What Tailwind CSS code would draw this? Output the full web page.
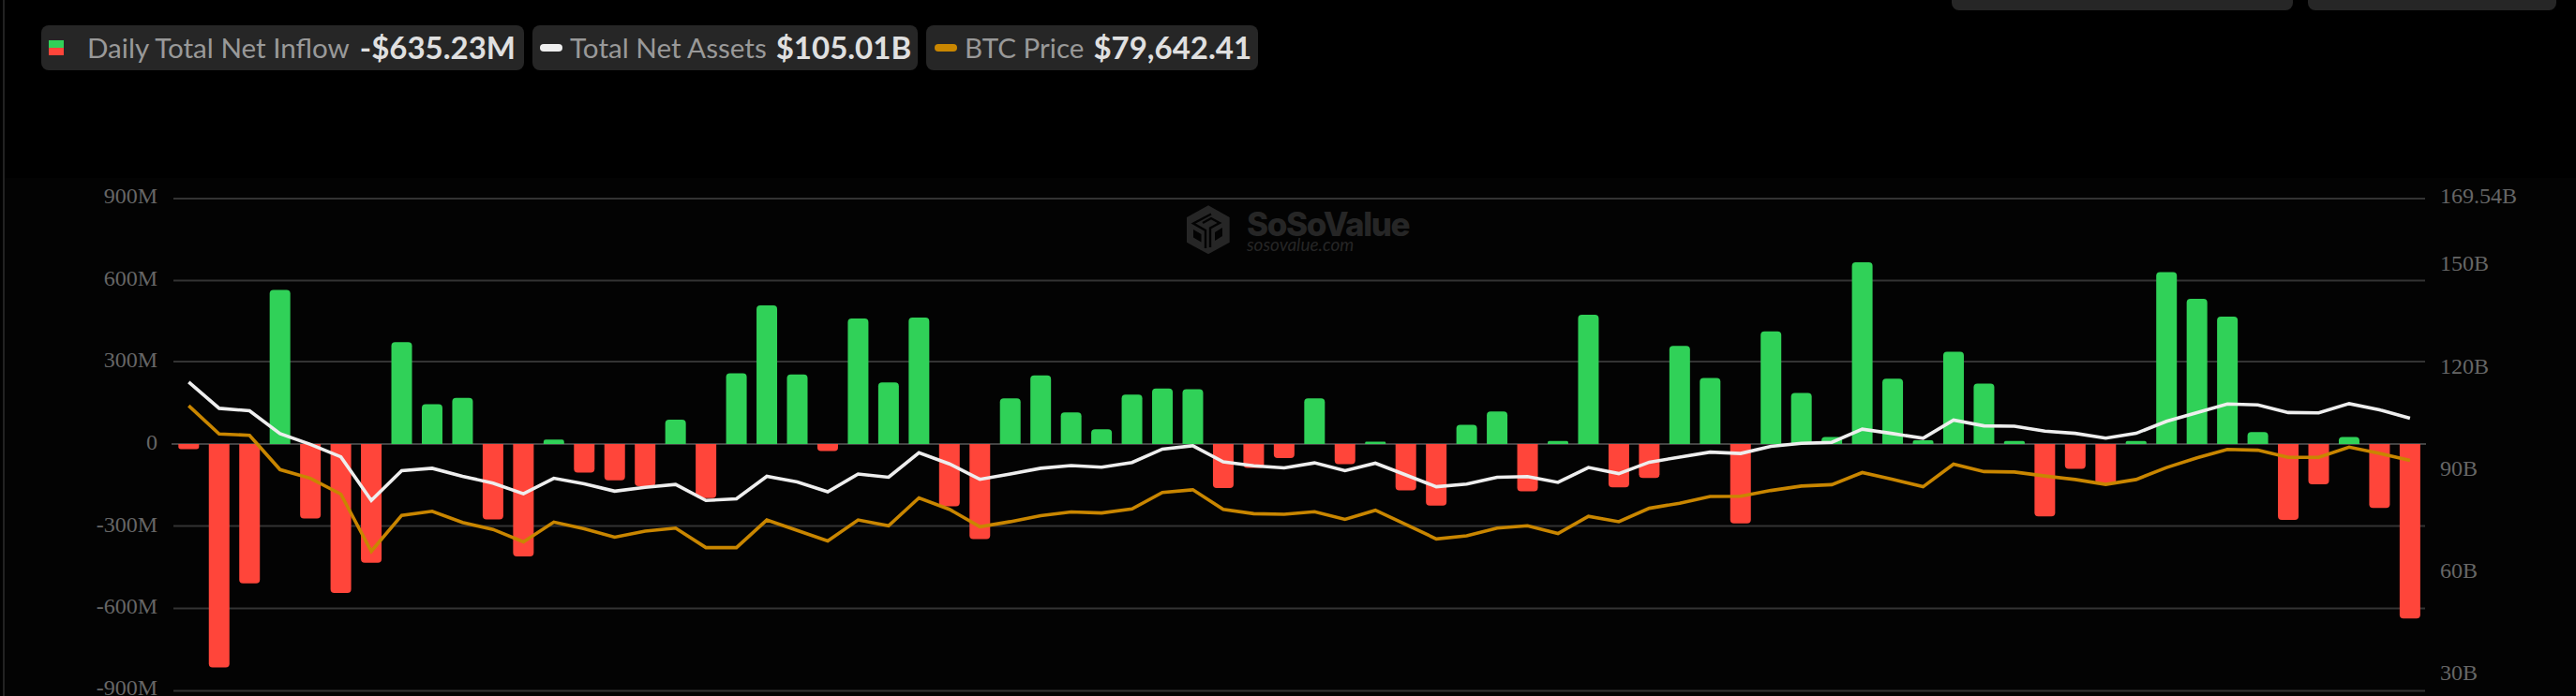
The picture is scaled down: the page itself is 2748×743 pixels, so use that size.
<!DOCTYPE html>
<html lang="en">
<head>
  <meta charset="UTF-8">
  <title>Daily Total Net Inflow</title>
  <script src="https://cdn.jsdelivr.net/npm/@tailwindcss/browser@4"></script>
</head>
<body class="bg-black overflow-hidden">
  <div class="w-[2748px] h-[743px] overflow-hidden bg-black">
    <div class="ml-[3px] h-full border-l-2 border-[#222] bg-[#030303]">
      <!-- top right buttons, cut off by the screenshot -->
      <div class="h-[11px] flex justify-end gap-[16px] pr-[21px] bg-black">
        <div class="w-[364px] h-[48px] -mt-[37px] rounded-lg bg-[#262626]"></div>
        <div class="w-[265px] h-[48px] -mt-[37px] rounded-lg bg-[#262626]"></div>
      </div>

      <!-- legend -->
      <div class="flex gap-[9px] pt-[16px] pb-[115px] pl-[39px] bg-black font-['Lato',sans-serif]">
        <div class="flex items-center h-[48px] w-[515px] pl-[8px] rounded-lg bg-[#262626]">
          <div class="w-[16px] h-[16px] flex flex-col">
            <div class="h-[8px] bg-[#30d158]"></div>
            <div class="h-[8px] bg-[#ff453a]"></div>
          </div>
          <span class="ml-[25px] text-[29.6px] text-[#999]">Daily Total Net Inflow</span>
          <span class="ml-[11px] text-[33px] font-bold text-[#e0e0e0]">-$635.23M</span>
        </div>
        <div class="flex items-center h-[48px] w-[411px] pl-[8px] rounded-lg bg-[#262626]">
          <div class="w-[24px] h-[8px] rounded-full bg-[#eee]"></div>
          <span class="ml-[8px] text-[29.6px] text-[#999]">Total Net Assets</span>
          <span class="ml-[10px] text-[33px] font-bold text-[#e0e0e0]">$105.01B</span>
        </div>
        <div class="flex items-center h-[48px] w-[354px] pl-[9px] rounded-lg bg-[#262626]">
          <div class="w-[24px] h-[8px] rounded-full bg-[#c98600]"></div>
          <span class="ml-[8px] text-[29.6px] text-[#999]">BTC Price</span>
          <span class="ml-[10px] text-[33px] font-bold text-[#e0e0e0]">$79,642.41</span>
        </div>
      </div>

      <!-- chart -->
      <svg id="chart" class="block w-[2743px] h-[553px]" viewBox="5 190 2743 553">
        <g stroke="#333" stroke-width="2">
          <line x1="185" x2="2587" y1="212" y2="212"/>
          <line x1="185" x2="2587" y1="299.5" y2="299.5"/>
          <line x1="185" x2="2587" y1="386" y2="386"/>
          <line x1="183" x2="2588" y1="474" y2="474" stroke="#444"/>
          <line x1="185" x2="2587" y1="561.5" y2="561.5"/>
          <line x1="185" x2="2587" y1="649.5" y2="649.5"/>
          <line x1="185" x2="2587" y1="737.5" y2="737.5"/>
        </g>

        <g fill="#666" font-size="24" font-family="'Liberation Serif', serif" text-anchor="end">
          <text x="168" y="217">900M</text>
          <text x="168" y="305">600M</text>
          <text x="168" y="392">300M</text>
          <text x="168" y="480">0</text>
          <text x="168" y="568">-300M</text>
          <text x="168" y="655">-600M</text>
          <text x="168" y="742">-900M</text>
        </g>
        <g fill="#666" font-size="24" font-family="'Liberation Serif', serif">
          <text x="2603" y="217">169.54B</text>
          <text x="2603" y="289">150B</text>
          <text x="2603" y="399">120B</text>
          <text x="2603" y="508">90B</text>
          <text x="2603" y="617">60B</text>
          <text x="2603" y="726">30B</text>
        </g>

        <!-- watermark: solid hexagon with the cube's S cut out -->
        <path fill="#262626" d="M1289 219.3 L1311.7 232 L1311.7 258.7 L1289 271.3 L1266 258.7 L1266 232 Z"/>
        <g fill="#030303">
          <path d="M1273 245 L1281.5 250 L1281.5 258.5 L1273 253.5 Z"/>
          <path d="M1296 248 L1304 243 L1304 252 L1296 257 Z"/>
        </g>
        <path fill="none" stroke="#030303" stroke-width="2.4" d="M1292 228.5 L1273 238.5 L1286 246 L1286 265 M1283 238 L1292 233 L1301 238 L1291 243.5 L1291 264"/>
        <text x="1330" y="251.5" fill="#262626" font-size="35" font-weight="800" letter-spacing="-1.4" font-family="Inter, sans-serif">SoSoValue</text>
        <text x="1330" y="268" fill="#262626" font-size="19" font-style="italic" font-family="Lato, sans-serif">sosovalue.com</text>

        <g id="bars"></g>
        <polyline id="assets" fill="none" stroke="#eeeeee" stroke-width="3.6" stroke-linejoin="miter"/>
        <polyline id="btc" fill="none" stroke="#c98600" stroke-width="3.6" stroke-linejoin="miter"/>
      </svg>
    </div>
  </div>

  <script>
    // px above (+) or below (-) the zero line, one per day
    const zero = 474, left = 201.3, step = 32.46, barW = 22
    const inflow = [-5.4,-238.4,-148.7,164.5,-79.4,-159,-126.8,108.8,42.4,49.2,-80.4,-119.9,4.7,-30.5,-38.8,-45,25.9,-57.8,75.4,147.9,74.3,-7.5,133.9,65.7,135,-66.4,-101.6,48.8,73.2,33.8,15.8,52.8,59.2,58.5,-47,-25.5,-15.1,48.8,-21.5,2.5,-49.6,-65.7,20.5,34.8,-50.6,3.2,137.9,-46.3,-36.3,104.8,70.4,-84.7,120.3,54.6,7.5,193.9,69.7,3.9,98.4,64.5,3.3,-77.3,-26.5,-42.2,3.3,183.4,155,136,12.8,-81,-43.1,7.6,-68.2,-186.3]
    const assets = [66.1,38.1,35.5,11.1,-0.4,-13.6,-60.3,-28.4,-25.9,-34.5,-41.7,-53.1,-36.6,-42.4,-50.3,-46.3,-43.1,-60.3,-58.5,-34.5,-40.6,-51,-32,-35.5,-9.3,-21.2,-37.7,-32,-25.9,-23,-24.8,-19.7,-5.4,-1.8,-19,-23.3,-25.5,-20.1,-28.4,-20.5,-33,-45.6,-42.7,-35.5,-34.8,-40.9,-25.1,-31.6,-19.4,-14,-8.6,-10.1,-2.5,0.7,1.8,15.8,11.1,6.1,25.5,19.4,19,13.7,11.4,6.2,11.4,24.2,33.6,42.7,41.7,33.6,33.2,43.1,36.5,27.5]
    const btc = [40.9,10.8,9.3,-27.3,-36.6,-53.5,-114.5,-76.1,-71.8,-83.7,-91.2,-104.5,-83.3,-90.5,-99.5,-93,-89.8,-110.6,-110.6,-81.1,-92.3,-103.4,-81.1,-87.3,-57.5,-69.7,-88.3,-82.9,-76.5,-72.5,-73.6,-69.3,-51.7,-48.8,-69.7,-74.4,-75,-72.2,-80.4,-70.7,-85.8,-101.3,-98,-89.8,-87.3,-95.5,-77.2,-82.9,-68.6,-63.2,-56,-55.7,-49.6,-44.9,-43.4,-30.5,-37.7,-45.6,-21.5,-29.4,-29.9,-34.1,-37.9,-43.1,-37.9,-25.1,-14.7,-5.7,-6.6,-14.2,-14.2,-3.3,-10,-17.5]

    const ns = 'http://www.w3.org/2000/svg'
    const bars = document.getElementById('bars')
    inflow.forEach((v, i) => {
      const h = Math.abs(v), x = left + step * i - barW / 2, r = Math.min(4, h / 2)
      const y = v > 0 ? zero - h : zero
      const p = document.createElementNS(ns, 'path')
      // only the far end of a bar is rounded
      p.setAttribute('d', v > 0
        ? `M${x} ${zero}V${y + r}Q${x} ${y} ${x + r} ${y}H${x + barW - r}Q${x + barW} ${y} ${x + barW} ${y + r}V${zero}Z`
        : `M${x} ${zero}V${zero + h - r}Q${x} ${zero + h} ${x + r} ${zero + h}H${x + barW - r}Q${x + barW} ${zero + h} ${x + barW} ${zero + h - r}V${zero}Z`)
      p.setAttribute('fill', v > 0 ? '#30d158' : '#ff453a')
      bars.appendChild(p)
    })
    const pts = a => a.map((v, i) => (left + step * i).toFixed(1) + ',' + (zero - v).toFixed(1)).join(' ')
    document.getElementById('assets').setAttribute('points', pts(assets))
    document.getElementById('btc').setAttribute('points', pts(btc))
  </script>
</body>
</html>
